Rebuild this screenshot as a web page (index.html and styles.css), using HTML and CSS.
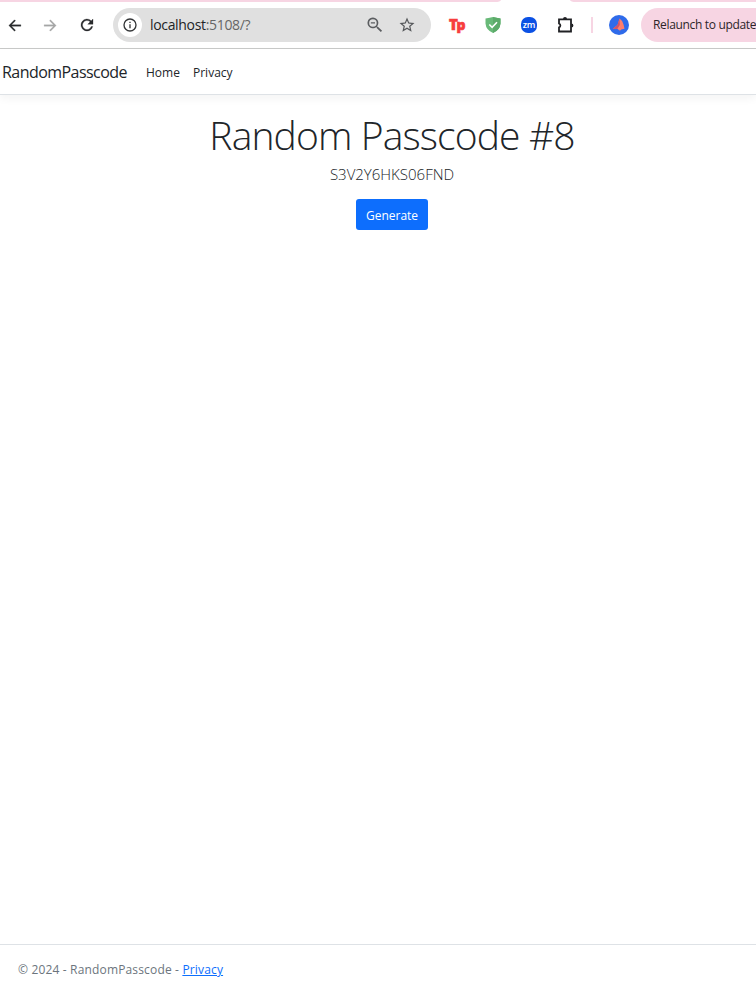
FILE: index.html
```html
<!DOCTYPE html>
<html lang="en">
<head>
<meta charset="utf-8">
<title>RandomPasscode</title>
<link rel="stylesheet" href="styles.css">
</head>
<body>
<div class="tabs"><span class="tab-left"></span><span class="tab-right"></span></div>
<div class="toolbar">
  <svg class="icon back" viewBox="0 0 24 24"><path d="M21 11H7.83l5.59-5.59L12 4l-8 8 8 8 1.41-1.41L7.83 13H21z"/></svg>
  <svg class="icon forward" viewBox="0 0 24 24"><path d="M3 11h13.17l-5.59-5.59L12 4l8 8-8 8-1.41-1.41L16.17 13H3z"/></svg>
  <svg class="icon reload" viewBox="0 0 24 24"><path d="M17.65 6.35A8 8 0 1 0 19.73 14h-2.08A6 6 0 1 1 16.2 7.8L13 11h7V4z"/></svg>
  <div class="omnibox">
    <span class="info"><svg viewBox="0 0 24 24"><path d="M11 7h2v2h-2zm0 4h2v6h-2zm1-9a10 10 0 1 0 0 20 10 10 0 0 0 0-20m0 18a8 8 0 1 1 0-16 8 8 0 0 1 0 16"/></svg></span>
    <span class="url">localhost<span class="port">:5108/?</span></span>
    <svg class="icon magnify" viewBox="0 0 24 24"><path d="M15.5 14h-.79l-.28-.27A6.5 6.5 0 1 0 13.73 14.43l.27.28v.79l5 4.99L20.49 19zM9.5 14a4.5 4.5 0 1 1 0-9 4.5 4.5 0 0 1 0 9M7 8.7h5v1.6H7z"/></svg>
    <svg class="icon star" viewBox="0 0 24 24"><path d="m22 9.24-7.19-.62L12 2 9.19 8.63 2 9.24l5.46 4.73L5.82 21 12 17.27 18.18 21l-1.63-7.03zM12 15.4l-3.76 2.27 1-4.28-3.32-2.88 4.38-.38L12 6.1l1.71 4.04 4.38.38-3.32 2.88 1 4.28z"/></svg>
  </div>
  <span class="ext tp">T<span class="tp-p">p</span></span>
  <svg class="ext shield" viewBox="0 0 16 16"><path d="M0.5 1.5Q5 .8 8 0q3 .8 7.5 1.5v5Q15 13 8 16 1 13 .5 6.5z" fill="#68b978"/><path d="M8 0q3 .8 7.5 1.5v5Q15 13 8 16z" fill="#5cab6a"/><path d="m4.3 7.5 2.8 2.8L12 5.2" fill="none" stroke="#fff" stroke-width="1.6"/></svg>
  <span class="zoom-badge">zm</span>
  <svg class="puzzle" viewBox="0 0 18 18"><path d="M2 3.3h12v12.2H2v-4.2a2 2 0 0 0 0-3.8z"/><path class="knob" d="M6 3a2 2 0 0 1 4 0zM14.4 7.4a2 2 0 0 1 0 4z"/></svg>
  <span class="divider"></span>
  <svg class="avatar" viewBox="0 0 20 20"><circle cx="10" cy="10" r="10" fill="#2f6bea"/><path d="M10.5 3.5q3.2 2 4 6l1 4.3-3.3.6-1.2 1.3-2.5-1.7-4.7-.2 4.7-3.8z" fill="#ff7e6c"/><path d="m10.5 3.5.3 6.5-2.5 4-4.5-.2 4.7-3.8z" fill="#cf5468"/></svg>
  <span class="relaunch"><span>Relaunch to update</span></span>
</div>
<header class="navbar"><a class="brand">RandomPasscode</a><a class="nav-home">Home</a><a class="nav-privacy">Privacy</a></header>
<main>
  <h1><span>Random Passcode #8</span></h1>
  <p class="code">S3V2Y6HKS06FND</p>
  <button>Generate</button>
</main>
<footer><span class="copy">© 2024 - RandomPasscode - <a>Privacy</a></span></footer>
</body>
</html>
```
FILE: styles.css
```css
* { box-sizing: border-box; }
body { margin: 0; width: 756px; height: 986px; overflow: hidden; display: flex; flex-direction: column; background: #fff; color: #212529; font: 13px/20px "Open Sans", "Noto Sans", sans-serif; white-space: nowrap; }
svg { display: block; flex: none; fill: currentColor; }
.tabs { height: 2px; flex: none; display: flex; justify-content: space-between; }
.tabs span { background: #f7d5e3; }
.tab-left { width: 501px; border-bottom-right-radius: 6px 2px; }
.tab-right { width: 186px; border-bottom-left-radius: 6px 2px; }
.toolbar { height: 47px; flex: none; display: flex; align-items: center; padding-left: 6px; border-bottom: 1px solid #c8c9c8; overflow: hidden; }
.icon { width: 17px; height: 17px; }
.back, .reload { color: #282a2c; }
.back, .forward, .reload { stroke: currentColor; stroke-width: .4; }
.forward { color: #a5a6a6; margin-left: 19px; }
.reload { width: 18px; height: 18px; margin-left: 19px; }
.omnibox { width: 318px; height: 34px; flex: none; margin-left: 17px; border-radius: 17px; background: #e0e0e0; display: flex; align-items: center; padding-left: 5px; }
.info { width: 24px; height: 24px; border-radius: 50%; background: #fff; display: grid; place-items: center; color: #333537; }
.info svg { width: 16px; height: 16px; }
.url { width: 215px; margin-left: 8px; font-size: 14px; letter-spacing: -.33px; color: #222426; }
.port { color: #666; }
.magnify { width: 20px; height: 20px; color: #5b5d60; }
.star { width: 18px; height: 18px; margin-left: 13px; color: #55575a; }
.ext { width: 16px; height: 16px; margin-left: 18px; flex: none; }
.tp { color: #f73d3d; font: 800 15px/14px "Open Sans", sans-serif; letter-spacing: -1.4px; -webkit-text-stroke: .6px #f73d3d; }
.tp-p { font-size: 14px; }
.shield { margin-left: 20px; }
.zoom-badge { width: 16px; height: 16px; flex: none; margin-left: 20px; border-radius: 7px; background: #0b51e4; color: #fff; font: 600 9px/15px "Open Sans", sans-serif; letter-spacing: -.3px; text-align: center; }
.puzzle { width: 18px; height: 18px; margin-left: 20px; fill: none; stroke: #202124; stroke-width: 1.8; }
.knob { fill: #202124; stroke: none; }
.divider { width: 2px; height: 16px; flex: none; margin-left: 16px; background: #f7d5e3; }
.avatar { width: 20px; height: 20px; margin-left: 16px; }
.relaunch { width: 180px; height: 34px; flex: none; margin-left: 12px; padding-left: 12px; border-radius: 17px; background: #f7d5e3; font-size: 12px; letter-spacing: -.33px; line-height: 34px; color: #2c2529; }
.navbar { height: 46px; flex: none; display: flex; align-items: center; padding-left: 2px; border-bottom: 1px solid #dee2e6; box-shadow: 0 4px 8px rgba(0,0,0,.045); }
.brand { width: 144px; font-size: 16px; letter-spacing: -.55px; }
.nav-home { width: 47px; font-size: 12px; padding-top: 2px; }
.nav-privacy { font-size: 12px; padding-top: 2px; }
main { flex: 1; display: flex; flex-direction: column; align-items: center; padding: 16px 0 0 28px; }
h1 { margin: 0; font-size: 39px; line-height: 48px; font-weight: 300; letter-spacing: -.87px; }
.code { margin: 5px 0 15px; font-size: 15px; line-height: 20px; font-weight: 300; letter-spacing: 0; }
button { width: 72px; height: 31px; padding: 2px 0 0; border: 0; border-radius: 3px; background: #0d6efd; color: #fff; font: 12px/29px "Open Sans", sans-serif; }
footer { height: 42px; flex: none; border-top: 1px solid #dee2e6; padding: 15px 0 0 18px; font-size: 12px; letter-spacing: .16px; line-height: 20px; color: #6c757d; }
footer a { color: #0d6efd; text-decoration: underline; }
```
